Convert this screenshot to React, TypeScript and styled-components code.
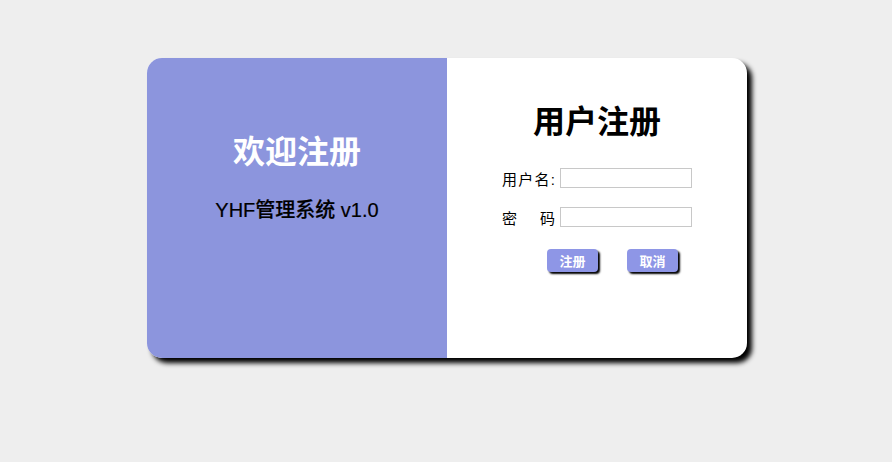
import styled, { createGlobalStyle } from "styled-components";

const GlobalStyle = createGlobalStyle`
  html, body {
    margin: 0;
    padding: 0;
    background: #eeeeee;
    font-family: "Liberation Sans", "Noto Sans CJK SC", sans-serif;
  }
`;

const Page = styled.div`
  width: 100%;
  height: 462px;
  padding-top: 58px;
  box-sizing: border-box;
`;

const Card = styled.div`
  width: 600px;
  height: 300px;
  margin: 0 auto;
  display: flex;
  border-radius: 15px;
  overflow: hidden;
  background: white;
  box-shadow: 5px 5px 5px #000;
  transform: translateX(1px);
`;

const Welcome = styled.div`
  width: 300px;
  background: #8c95dd;
  display: flex;
  flex-direction: column;
  align-items: center;
  padding-top: 74px;
  box-sizing: border-box;
`;

const WelcomeTitle = styled.h1`
  margin: 0;
  color: white;
  font-size: 32px;
  font-weight: bold;
  line-height: 40px;
`;

const SubTitle = styled.h2`
  margin: 26px 0 0;
  color: #000;
  font-size: 20px;
  font-weight: 500;
  line-height: 24px;
  -webkit-text-stroke: 0.2px #000;
`;

const FormPanel = styled.div`
  flex: 1;
  display: flex;
  flex-direction: column;
  align-items: center;
  padding-top: 44px;
  box-sizing: border-box;
`;

const FormTitle = styled.h1`
  margin: 0 0 26px;
  font-size: 32px;
  font-weight: bold;
  line-height: 40px;
  color: #000;
`;

const Row = styled.div`
  display: flex;
  align-items: center;
  gap: 5px;
  height: 20px;
  margin-bottom: 19px;
`;

const Label = styled.label`
  width: 53px;
  font-size: 15px;
  color: #000;
  text-align: justify;
  text-align-last: justify;
  white-space: nowrap;
`;

const Input = styled.input`
  width: 132px;
  height: 20px;
  box-sizing: border-box;
  border: 1px solid #c8c8c8;
  padding: 0 3px;
  margin: 0;
  outline: none;
  background: white;
`;

const Buttons = styled.div`
  display: flex;
  gap: 29px;
  margin-top: 3px;
  padding-left: 31px;
`;

const Button = styled.button`
  width: 51px;
  height: 23px;
  border: none;
  border-radius: 4px;
  background: #8e96e6;
  color: white;
  font-family: "Noto Sans CJK SC", sans-serif;
  font-size: 13px;
  font-weight: bold;
  padding: 0;
  box-shadow: 2px 2px 2px #000;
  cursor: pointer;
`;

export default function App() {
  return (
    <>
      <GlobalStyle />
      <Page>
        <Card>
          <Welcome>
            <WelcomeTitle>欢迎注册</WelcomeTitle>
            <SubTitle>YHF管理系统 v1.0</SubTitle>
          </Welcome>
          <FormPanel>
            <FormTitle>用户注册</FormTitle>
            <Row>
              <Label>用户名:</Label>
              <Input type="text" />
            </Row>
            <Row>
              <Label>密 码</Label>
              <Input type="password" />
            </Row>
            <Buttons>
              <Button>注册</Button>
              <Button>取消</Button>
            </Buttons>
          </FormPanel>
        </Card>
      </Page>
    </>
  );
}
